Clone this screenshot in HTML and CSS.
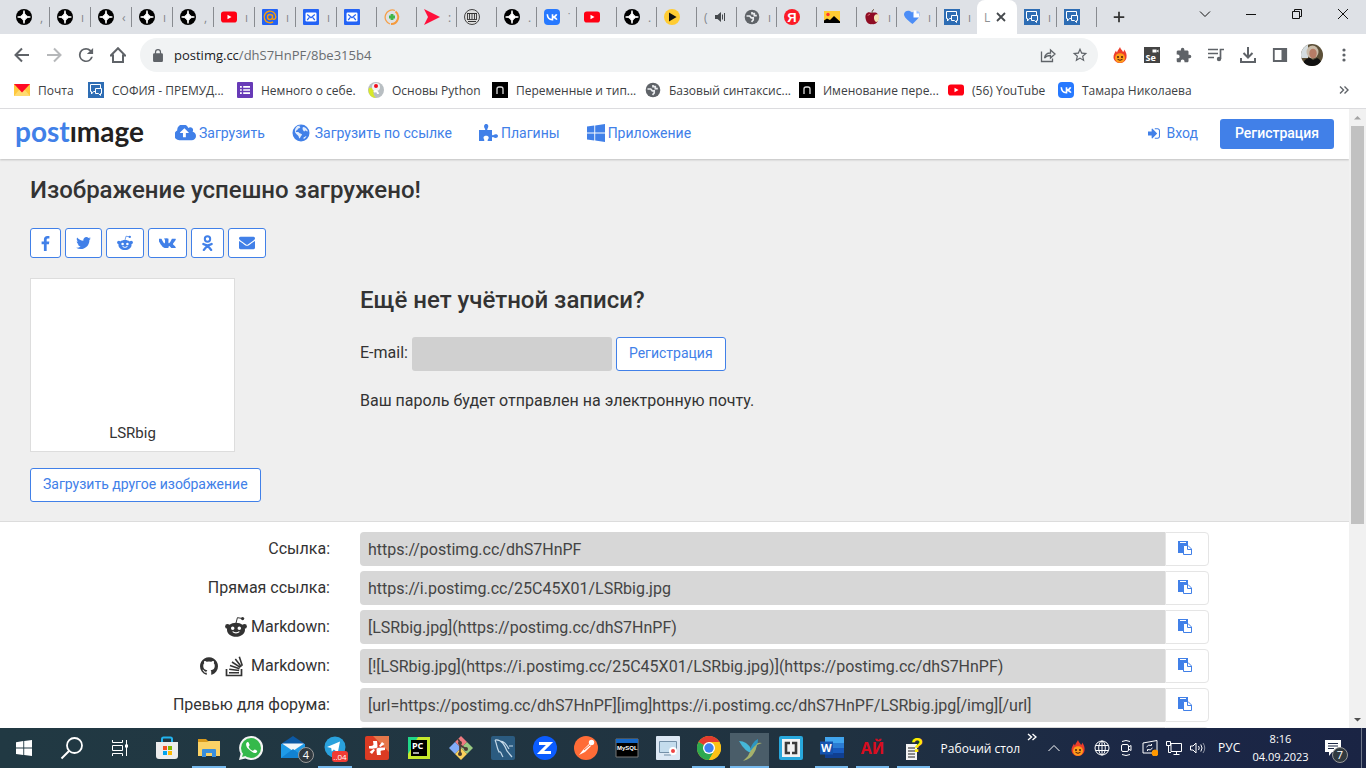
FILE: index.html
```html
<!DOCTYPE html>
<html lang="ru">
<head>
<meta charset="utf-8">
<title>LSRbig — Postimages</title>
<link rel="stylesheet" href="styles.css">
</head>
<body>
<svg class="sprite" aria-hidden="true">
  <symbol id="i-spark" viewBox="0 0 16 16"><circle cx="8" cy="8" r="8" fill="#000"/><path d="M8 1.600Q8.300 7.700 14.400 8 8.300 8.300 8 14.400 7.700 8.300 1.600 8 7.700 7.700 8 1.600z" fill="#fff" stroke="#fff" stroke-width=".9"/></symbol>
  <symbol id="i-yt" viewBox="0 0 16 16"><rect y="2.500" width="16" height="11" rx="2.800" fill="#ff0013"/><path d="M6.500 5.700v4.600l4-2.300z" fill="#fff"/></symbol>
  <symbol id="i-mailru" viewBox="0 0 16 16"><rect width="16" height="16" rx="1" fill="#2463f5"/><path d="M10.500 8a2.500 2.500 0 1 1-5 0 2.500 2.500 0 0 1 5 0zm0-2.500V9c0 2.300 3.300 1.600 3.300-1A5.800 5.800 0 1 0 11 12.900" fill="none" stroke="#ff9e00" stroke-width="1.400"/></symbol>
  <symbol id="i-mail" viewBox="0 0 16 16"><rect width="16" height="16" rx="1" fill="#2463f5"/><rect x="2.500" y="3.500" width="11" height="9" rx="1.200" fill="#fff"/><path d="M4.200 5.500 8 8.800l3.800-3.300M4.200 11l2.200-2.600M11.800 11 9.600 8.400" fill="none" stroke="#2463f5" stroke-width="1.200"/></symbol>
  <symbol id="i-plus" viewBox="0 0 16 16"><path d="M11 1.500A7.200 7.200 0 1 0 6 15" fill="none" stroke="#f5a04a" stroke-width="1.300"/><path d="M11.500 2.500A7 7 0 0 1 7 15" fill="none" stroke="#f59a3d" stroke-width="2"/><path d="M8 5v6M5 8h6" stroke="#41b649" stroke-width="2.800"/></symbol>
  <symbol id="i-arrow" viewBox="0 0 16 16"><path d="M0 0 16 8 0 16 4 8z" fill="#ff0f3b"/></symbol>
  <symbol id="i-museum" viewBox="0 0 16 16"><circle cx="8" cy="8" r="7.500" fill="#ddd" stroke="#444"/><path d="M3 4.500h10M4 12.500h8" stroke="#333"/><path d="M3.500 5v5M5.500 5v5M8 5v5M10.500 5v5M12.500 5v5M3 10.500h10" stroke="#444"/></symbol>
  <symbol id="i-vk" viewBox="0 0 16 16"><rect width="16" height="16" rx="4" fill="#2779ff"/><path d="M3.300 5.300c.2 3.400 1.900 5.400 4.900 5.400h.3V5.300M12.600 5.300c-.5 1.500-2 2.600-3.800 2.800 2 .2 3.400 1.100 4.100 2.600" fill="none" stroke="#fff" stroke-width="1.600"/></symbol>
  <symbol id="i-play" viewBox="0 0 16 16"><circle cx="8" cy="8" r="8" fill="#fc3"/><path d="M5 3.600v8.800L12.600 8z" fill="#111"/></symbol>
  <symbol id="i-globe" viewBox="0 0 16 16"><circle cx="8" cy="8" r="7.300" fill="#5f6368"/><path d="M2.500 7h3.200l1.600 1.800h1.900v2.200L7.500 12.800M8 3v1.700h2.300v1.900h2.500" fill="none" stroke="#e8eaed" stroke-width="1.700"/></symbol>
  <symbol id="i-ya" viewBox="0 0 16 16"><circle cx="8" cy="8" r="8" fill="#fc1c27"/><text x="8" y="12.500" text-anchor="middle" class="g-ya">Я</text></symbol>
  <symbol id="i-pic" viewBox="0 0 16 16"><rect y="2" width="16" height="12" fill="#fc3"/><circle cx="4" cy="5.500" r="1.700" fill="#f33"/><path d="M0 14v-2.500l3-2 3 1.500 4-4 6 5.500V14z" fill="#000"/></symbol>
  <symbol id="i-apple" viewBox="0 0 16 16"><path d="M8 4C3.500 2 1 4.500 1.500 9s3.500 7 6.500 6c3.500 1 6-1.500 6.500-6S12 2.500 8 4z" fill="#8f0d24"/><path d="M14.500 5.500c-3-1-5 1-4.500 4s2 4 3.500 3 2-5 1-7z" fill="#f3e6b5"/><path d="M4 6.500c.5-1 1.500-1.200 2-1" stroke="#e88" fill="none"/><path d="M8 4c0-2 .7-3 2-3.500" stroke="#5b3a1e" fill="none"/></symbol>
  <symbol id="i-heart" viewBox="0 0 16 16"><path d="M8.500 15C3 10.500 0 8 0 5.200 0 2 5 0 8 3.500c3-3 8-1.500 8 2 0 2.500-3 5-7.500 9.500z" fill="#4c8df6"/><path d="M9.500 1.500h3l3 3v4h-6z" fill="#fff"/><path d="M12.500 1.500v3h3" fill="#9cc1ff"/></symbol>
  <symbol id="i-chat" viewBox="0 0 16 16"><rect width="16" height="16" fill="#2e6db4"/><path d="M7 9.500H5.500L3.500 12V9.500h-1v-7h10v4M7.500 6.500h6v5h-1v2l-2-2h-3z" fill="none" stroke="#fff"/></symbol>
  <symbol id="i-ymail" viewBox="0 0 16 16"><path d="M0 2h16v12H0z" fill="#ffc83d"/><path d="M0 14 5 8h6l5 6z" fill="#ffdb70"/><path d="M0 2h16L8 10.500z" fill="#ff0a24"/></symbol>
  <symbol id="i-forms" viewBox="0 0 16 16"><rect width="16" height="16" rx="1" fill="#673ab7"/><path d="M3 4.800h1.800M3 8h1.800M3 11.200h1.800M6.200 4.800H13M6.200 8H13M6.200 11.200H13" stroke="#fff" stroke-width="1.700"/></symbol>
  <symbol id="i-stepik" viewBox="0 0 16 16"><circle cx="8" cy="8" r="8" fill="#b8bec2"/><path d="M1 6c4-1 5 2 4.500 4.500S7 15 8 16C3 16-.8 11 1 6z" fill="#d8e829"/><circle cx="8" cy="5" r="4" fill="#f0f2f3"/><circle cx="8" cy="4" r="2" fill="#f00e1e"/><path d="M6 10c2-2 4 0 4 2" stroke="#fff" stroke-width="2" fill="none"/></symbol>
  <symbol id="i-n" viewBox="0 0 16 16"><rect width="16" height="16" fill="#000"/><path d="M5 12V7q0-2 2-2h2q2 0 2 2v5" fill="none" stroke="#ddd" stroke-width="1.300"/></symbol>
  <symbol id="i-sound" viewBox="0 0 16 16"><path d="M3 6h2.500L9 3v10L5.500 10H3z" fill="#45494d"/><path d="M10.500 5.500v5M12.500 4v8" stroke="#45494d"/></symbol>
  <symbol id="i-x" viewBox="0 0 16 16"><path d="m4 4 8 8M12 4l-8 8" stroke="#45494d" stroke-width="1.800"/></symbol>
  <symbol id="i-flame" viewBox="0 0 16 16"><path d="M8 0c.5 2.500 2.500 3 3 5 1-.5 1-1.500 1-2.500 2 2 3 5 2.500 8-.5 3.500-3.500 5.500-6.500 5.500S1.800 14 1.500 10.500C1.300 7.500 3 5.500 4 3.500c.3 1 .5 1.500 1 2C5.500 3.500 7 2 8 0z" fill="#ee3d2b"/><ellipse cx="8" cy="11" rx="5" ry="4.800" fill="#ff9c1a"/><circle cx="6" cy="10" r="1" fill="#4b1d0c"/><circle cx="10" cy="10" r="1" fill="#4b1d0c"/><path d="M5.500 12.300q2.500 2 5 0" stroke="#4b1d0c" fill="none"/></symbol>
  <symbol id="i-reddit" viewBox="0 0 20 20"><path d="M10 6.400 11.300 1.500l4 .7" fill="none" stroke="currentColor" stroke-width=".9"/><circle cx="16" cy="2.300" r="1.500" fill="currentColor"/><circle cx="2.300" cy="9.500" r="2.200" fill="currentColor"/><circle cx="17.700" cy="9.500" r="2.200" fill="currentColor"/><path fill="currentColor" fill-rule="evenodd" d="M10 6.200c4.700 0 8.200 2.700 8.200 6.200s-3.500 6.400-8.200 6.400-8.200-2.900-8.200-6.400S5.300 6.200 10 6.200zM7 9.600a1.600 1.600 0 1 0 0 3.200 1.600 1.600 0 0 0 0-3.200zm6 0a1.600 1.600 0 1 0 0 3.200 1.600 1.600 0 0 0 0-3.200zM6.600 14.400c1.800 2 5 2 6.800 0l-.7-.5c-1.500 1.300-3.900 1.300-5.400 0z"/></symbol>
  <symbol id="i-paste" viewBox="0 0 16 16"><path d="M1 1h10v4H7v8H1z" fill="#4180e8"/><path d="M3 2.500h6" stroke="#fff"/><path d="M6.500 5.500h4.500l3.500 3.500v5.500h-8z" fill="#fff" stroke="#4180e8"/><path d="M10.500 5.500V9.500h4" fill="none" stroke="#4180e8"/></symbol>
</svg>

<header class="browser">
  <div class="tabs">
    <div class="tab tab-wide"><svg><use href="#i-spark"/></svg><span>,</span></div>
    <div class="tab tab-wide"><svg><use href="#i-spark"/></svg><span>ı</span></div>
    <div class="tab tab-wide"><svg><use href="#i-spark"/></svg><span>‹</span></div>
    <div class="tab tab-wide"><svg><use href="#i-spark"/></svg><span>ı</span></div>
    <div class="tab tab-wide"><svg><use href="#i-spark"/></svg><span>,</span></div>
    <div class="tab tab-wide"><svg><use href="#i-yt"/></svg><span>ı</span></div>
    <div class="tab tab-wide"><svg><use href="#i-mailru"/></svg><span>ı</span></div>
    <div class="tab tab-wide"><svg><use href="#i-mail"/></svg><span>ı</span></div>
    <div class="tab"><svg><use href="#i-mail"/></svg></div>
    <div class="tab"><svg><use href="#i-plus"/></svg></div>
    <div class="tab"><svg><use href="#i-arrow"/></svg><span>:</span></div>
    <div class="tab"><svg><use href="#i-museum"/></svg></div>
    <div class="tab"><svg><use href="#i-spark"/></svg><span>.</span></div>
    <div class="tab"><svg><use href="#i-vk"/></svg><span>˙</span></div>
    <div class="tab"><svg><use href="#i-yt"/></svg></div>
    <div class="tab"><svg><use href="#i-spark"/></svg><span>.</span></div>
    <div class="tab"><svg><use href="#i-play"/></svg></div>
    <div class="tab tab-audio"><span>(</span><svg><use href="#i-sound"/></svg></div>
    <div class="tab"><svg><use href="#i-globe"/></svg><span>ı</span></div>
    <div class="tab"><svg><use href="#i-ya"/></svg></div>
    <div class="tab"><svg><use href="#i-pic"/></svg></div>
    <div class="tab"><svg><use href="#i-apple"/></svg><span>ı</span></div>
    <div class="tab"><svg><use href="#i-heart"/></svg><span>ı</span></div>
    <div class="tab tab-last"><svg><use href="#i-chat"/></svg><span>ı</span></div>
    <div class="tab tab-active"><span>L</span><button aria-label="Закрыть вкладку"><svg><use href="#i-x"/></svg></button></div>
    <div class="tab"><svg><use href="#i-chat"/></svg><span>ı</span></div>
    <div class="tab"><svg><use href="#i-chat"/></svg></div>
    <button class="new-tab" aria-label="Новая вкладка"><svg viewBox="0 0 16 16"><path d="M8 2v12M2 8h12" stroke="#333" stroke-width="2"/></svg></button>
    <div class="window-buttons">
      <button aria-label="Поиск вкладок"><svg viewBox="0 0 12 12"><path d="m1 3.500 5 5 5-5"/></svg></button>
      <button aria-label="Свернуть"><svg viewBox="0 0 12 12"><path d="M1 6.500h10"/></svg></button>
      <button aria-label="Восстановить"><svg viewBox="0 0 12 12"><path d="M1.500 3.500h7v7h-7zM3.500 3.500v-2h7v7h-2"/></svg></button>
      <button aria-label="Закрыть"><svg viewBox="0 0 12 12"><path d="m1 1 10 10M11 1 1 11"/></svg></button>
    </div>
  </div>

  <div class="toolbar">
    <button aria-label="Назад"><svg viewBox="0 0 16 16"><path d="M15 8H2M8 1.500 1.500 8 8 14.500" class="line"/></svg></button>
    <button class="dim" aria-label="Вперёд"><svg viewBox="0 0 16 16"><path d="M1 8h13M8 1.500 14.500 8 8 14.500" class="line"/></svg></button>
    <button aria-label="Обновить"><svg viewBox="3 3 18 18"><path d="M17.650 6.350A7.960 7.960 0 0 0 12 4a8 8 0 1 0 7.730 10h-2.080A6 6 0 1 1 12 6c1.660 0 3.140.69 4.220 1.780L13 11h7V4z" fill="#5f6368"/></svg></button>
    <button aria-label="Домой"><svg viewBox="0 0 16 16"><path d="M.8 8.500 8 1.200l7.200 7.300H13V15H3V8.500z" class="line"/></svg></button>
    <div class="address">
      <svg class="lock" viewBox="4 1 16 21"><path fill="#5f6368" d="M18 8h-1V6A5 5 0 0 0 7 6v2H6a2 2 0 0 0-2 2v10a2 2 0 0 0 2 2h12a2 2 0 0 0 2-2V10a2 2 0 0 0-2-2zM9 6a3 3 0 0 1 6 0v2H9z"/></svg>
      <span class="url"><b>postimg.cc</b>/dhS7HnPF/8be315b4</span>
      <button aria-label="Поделиться"><svg viewBox="0 0 16 16"><path d="M1.500 4.500v10h11v-3M4.500 11c.5-3.500 2.500-5 6-5V3l4.500 4-4.500 4V8.500c-3 0-4.500.5-6 2.500z" fill="none" stroke="#5f6368" stroke-width="1.300"/></svg></button>
      <button aria-label="Добавить закладку"><svg viewBox="1 1 22 22"><path fill="#5f6368" d="m22 9.240-7.190-.62L12 2 9.190 8.630 2 9.240l5.460 4.730L5.820 21 12 17.270 18.180 21l-1.630-7.030zM12 15.400l-3.760 2.270 1-4.280-3.320-2.880 4.380-.38L12 6.100l1.710 4.040 4.380.38-3.320 2.880 1 4.280z"/></svg></button>
    </div>
    <button aria-label="Расширение"><svg><use href="#i-flame"/></svg></button>
    <button aria-label="Selenium"><svg viewBox="0 0 16 16"><path d="M0 0h16v16H0z" fill="#444"/><path d="M8.500 2.500h4v3h-4zM12.500 4l2-1.500v3z" fill="#fff"/><text x="1.500" y="13.800" class="g-se">Se</text></svg></button>
    <button aria-label="Расширения"><svg viewBox="1 0 23 23"><path fill="#5f6368" d="M20.500 11H19V7c0-1.100-.9-2-2-2h-4V3.500a2.500 2.500 0 0 0-5 0V5H4c-1.100 0-2 .9-2 2v3.800h1.500a2.700 2.700 0 0 1 0 5.400H2V20c0 1.100.9 2 2 2h3.800v-1.500a2.700 2.700 0 0 1 5.400 0V22H17c1.100 0 2-.9 2-2v-4h1.500a2.500 2.500 0 0 0 0-5z"/></svg></button>
    <button aria-label="Медиа"><svg viewBox="0 0 16 16"><path d="M0 2.500h10M0 6.500h10M0 10.500h6M12.500 12V2.500H16" stroke="#5f6368" stroke-width="1.700" fill="none"/><circle cx="11" cy="12" r="2.200" fill="#5f6368"/></svg></button>
    <button aria-label="Загрузки"><svg viewBox="0 0 16 16"><path d="M8 0v10M3.500 6 8 10.500 12.500 6M1 11v4h14v-4" stroke="#5f6368" stroke-width="2" fill="none"/></svg></button>
    <button aria-label="Боковая панель"><svg viewBox="0 0 16 16"><path d="M1.800 2h12.400v12H1.800z" fill="none" stroke="#5f6368" stroke-width="1.800"/><path d="M9.500 2H14v12H9.500z" fill="#5f6368"/></svg></button>
    <button aria-label="Профиль" class="profile"><svg viewBox="0 0 22 22"><clipPath id="av"><circle cx="11" cy="11" r="11"/></clipPath><g clip-path="url(#av)"><path d="M0 0h22v22H0z" fill="#5c5038"/><path d="M0 0h7v14H0z" fill="#d5dde0"/><ellipse cx="11.500" cy="8" rx="6" ry="6.500" fill="#c9bba8"/><ellipse cx="12" cy="9.500" rx="3.700" ry="4.800" fill="#b77c66"/><path d="M2 22c0-6 4-8 7-8l3 2 4-2c3 1 5 4 5 8z" fill="#111"/></g></svg></button>
    <button aria-label="Меню"><svg viewBox="0 0 16 16" fill="#5f6368"><circle cx="8" cy="3" r="1.600"/><circle cx="8" cy="8" r="1.600"/><circle cx="8" cy="13" r="1.600"/></svg></button>
  </div>

  <nav class="bookmarks">
    <a href="#"><svg><use href="#i-ymail"/></svg>Почта</a>
    <a href="#"><svg><use href="#i-chat"/></svg>СОФИЯ - ПРЕМУД...</a>
    <a href="#"><svg><use href="#i-forms"/></svg>Немного о себе.</a>
    <a href="#"><svg><use href="#i-stepik"/></svg>Основы Python</a>
    <a href="#"><svg><use href="#i-n"/></svg>Переменные и тип...</a>
    <a href="#"><svg><use href="#i-globe"/></svg>Базовый синтаксис...</a>
    <a href="#"><svg><use href="#i-n"/></svg>Именование пере...</a>
    <a href="#"><svg><use href="#i-yt"/></svg>(56) YouTube</a>
    <a href="#"><svg><use href="#i-vk"/></svg>Тамара Николаева</a>
    <button aria-label="Другие закладки"><svg viewBox="0 0 10 10"><path d="m1 1.500 3.500 3.500L1 8.500M5.500 1.500 9 5 5.500 8.500" fill="none" stroke="#5f6368" stroke-width="1.400"/></svg></button>
  </nav>
</header>

<div class="viewport">
  <div class="page">
    <header class="site-header">
      <a class="logo" href="#"><span>post</span>ımage</a>
      <nav class="site-nav">
        <a href="#"><svg class="ic-cloud" viewBox="0 192 1856 1408"><path fill="currentColor" d="M1216 864q0-14-9-23l-352-352q-9-9-23-9t-23 9l-351 351q-10 12-10 24 0 14 9 23t23 9h224v352q0 13 9.500 22.500t22.500 9.500h192q13 0 22.500-9.500t9.500-22.500v-352h224q13 0 22.500-9.500t9.500-22.500zm640 288q0 159-112.500 271.500t-271.500 112.500h-1088q-185 0-316.500-131.500t-131.500-316.500q0-130 70-240t188-165q-2-30-2-43 0-212 150-362t362-150q156 0 285.500 87t188.500 231q71-62 166-62 106 0 181 75t75 181q0 76-41 138 130 31 213.500 135.500t83.500 238.500z"/></svg>Загрузить</a>
        <a href="#" class="nav-globe"><svg viewBox="0 0 18 18"><circle cx="9" cy="9" r="8.500" fill="currentColor"/><path d="M9 1.500c-1.500.3-2 1-1 1.500s-.5 1.200-1.500 1.500-.5 1.500-2 2-.5 2 1 1.500 1.500 1 3 1.500 2 1 1 2-1 2-2 3c-.8-.7-.5-2-1.500-3S3.500 9.500 3 8 3.500 3 5.500 2zM11 3c2 .2 3 1 4 2.500.8 1.200.8 1.500.5 2-1.500 0-1-1-2-1s-.7 1.500-1.700.7S10 4.200 11 3zM12 13c1-.2 1.800-1 2.500-.8-.5 1.200-1.500 2.200-2.700 2.800-.4-.6-.3-1.400.2-2z" fill="#fff" opacity=".85"/></svg>Загрузить по ссылке</a>
        <a href="#"><svg class="ic-puzzle" viewBox="0 0 19 18"><path fill="currentColor" d="M0 6h5.500c.9 0 .9-.7.3-1.600C4.500 2.700 5 0 7.200 0s2.700 2.700 1.400 4.400C8 5.300 8.100 6 9 6h4v4.500c0 .8.800 1 1.500.4 1.700-1.300 4.500-.9 4.500 1.100s-2.800 2.500-4.500 1.200c-.7-.6-1.500-.3-1.500.5V17H8.800c-.9-1 .9-1.800.9-3.200s-1.300-2-2.600-2-2.600.6-2.600 2S6 16 5.100 17H0z"/></svg>Плагины</a>
        <a href="#"><svg viewBox="0 0 18 18"><path fill="currentColor" d="M0 2.600 7.300 1.500v7H0zM8.200 1.400 18 0v8.500H8.200zM0 9.400h7.300v7.100L0 15.400zM8.200 9.400H18V18l-9.800-1.400z"/></svg>Приложение</a>
      </nav>
      <a class="login" href="#"><svg viewBox="192 256 1472 1280"><path fill="currentColor" d="M1312 896q0 26-19 45l-544 544q-19 19-45 19t-45-19-19-45v-288h-448v-512h448v-288q0-26 19-45t45-19 45 19l544 544q19 19 19 45zm352-352v704q0 119-84.500 203.500t-203.500 84.500h-352v-128h352q66 0 113-47t47-113v-704q0-66-47-113t-113-47h-352V256h352q119 0 203.500 84.500t84.500 203.500z"/></svg>Вход</a>
      <a class="register" href="#">Регистрация</a>
    </header>

    <main>
      <section class="uploaded">
        <h1>Изображение успешно загружено!</h1>
        <div class="share">
          <a href="#" aria-label="Facebook"><svg class="w-s" viewBox="479 0 864 1664"><path fill="currentColor" d="M1343 12v264h-157q-86 0-116 36t-30 108v189h293l-39 296h-254v759h-306v-759h-255v-296h255v-218q0-186 104-288.500t277-102.500q147 0 228 12z"/></svg></a>
          <a href="#" aria-label="Twitter"><svg class="w-m" viewBox="108 256 1576 1280"><path fill="currentColor" d="M1684 408q-67 98-162 167 1 14 1 42 0 130-38 259.500t-115.500 248.500-184.500 210.500-258 146-323 54.500q-271 0-496-145 35 4 78 4 225 0 401-138-105-2-188-64.500t-114-159.500q33 5 61 5 43 0 85-11-112-23-185.500-111.500t-73.500-205.500v-4q68 38 146 41-66-44-105-115t-39-154q0-88 44-163 121 149 294.500 238.500t371.500 99.500q-8-38-8-74 0-134 94.500-228.500t228.500-94.500q140 0 236 102 109-21 205-78-37 115-142 178 93-10 186-50z"/></svg></a>
          <a href="#" aria-label="Reddit"><svg class="w-l"><use href="#i-reddit"/></svg></a>
          <a href="#" aria-label="ВКонтакте"><svg class="w-xl" viewBox="40 420 1830 1050"><path fill="currentColor" d="M1853 520q23 64-150 294-24 32-65 85-78 100-90 131-17 41 14 81 17 21 81 82h1l1 1 1 1 2 2q141 131 191 221 3 5 6.500 12.500t7 26.500-.5 34-25 27.500-59 12.500l-256 4q-24 5-56-5t-52-22l-20-12q-30-21-70-64t-68.500-77.500-61-58-56.500-15.500q-3 1-8 3.500t-17 14.500-21.500 29.500-17 52-6.500 77.500q0 15-3.500 27.500t-7.500 18.500l-4 5q-18 19-53 22h-115q-71 4-146-16.500t-131.500-53-103-66-70.500-57.500l-25-24q-10-10-27.500-30t-71.500-91-106-151-122.500-211-130.500-272q-6-16-6-27t3-16l4-6q15-19 57-19l274-2q12 2 23 6.500t16 8.500l5 3q16 11 24 32 20 50 46 103.500t41 81.500l16 29q29 60 56 104t48.500 68.500 41.500 38.500 34 14 27-5q2-1 5-5t12-22 13.500-47 9.500-81 0-125q-2-40-9-73t-14-46l-6-12q-25-34-85-43-13-2 5-24 17-19 38-30 53-26 239-24 82 1 135 13 20 5 33.500 13.500t20.500 24 10.500 32 3.500 45.500-1 55-2.500 70.500-1.500 82.500q0 11-1 42t-.5 48 3.500 40.500 11.500 39 22.500 24.500q8 2 17 4t26-11 38-34.500 52-67 68-107.500q60-104 107-225 4-10 10-17.500t11-10.500l4-3 5-2.500 13-3 20-.5 288-2q39-5 64 2.500t31 16.500z"/></svg></a>
          <a href="#" aria-label="Одноклассники"><svg class="w-ok" viewBox="0 0 11 16"><circle cx="5.500" cy="4" r="2.700" fill="none" stroke="currentColor" stroke-width="2"/><path d="M1.300 9q4.200 2.600 8.400 0M5.500 10.500 1.800 15M5.500 10.500 9.200 15" fill="none" stroke="currentColor" stroke-width="2.200" stroke-linecap="round"/></svg></a>
          <a href="#" aria-label="Почта"><svg class="w-l" viewBox="0 256 1792 1408"><path fill="currentColor" d="M1792 710v794q0 66-47 113t-113 47h-1472q-66 0-113-47t-47-113v-794q44 49 101 87 362 246 497 345 57 42 92.500 65.500t94.500 48 110 24.500h2q51 0 110-24.500t94.500-48 92.500-65.500q170-123 498-345 57-39 100-87zm0-294q0 79-49 151t-122 123q-376 261-468 325-10 7-42.500 31t-54 38.500-52 32.500-57.500 27-50 9h-2q-23 0-50-9t-57.500-27-52-32.500-54-38.500-42.500-31q-91-64-262-182.500t-205-142.500q-62-42-117-115.500t-55-136.500q0-78 41.500-130t118.500-52h1472q65 0 112.500 47t47.500 113z"/></svg></a>
        </div>
        <div class="columns">
          <div class="preview">
            <figure><figcaption>LSRbig</figcaption></figure>
            <a class="outline-button" href="#">Загрузить другое изображение</a>
          </div>
          <form class="signup">
            <h2>Ещё нет учётной записи?</h2>
            <div class="signup-line">
              <label for="email">E-mail:</label>
              <input id="email" type="email">
              <button class="outline-button" type="button">Регистрация</button>
            </div>
            <p>Ваш пароль будет отправлен на электронную почту.</p>
          </form>
        </div>
      </section>

      <section class="codes">
        <div class="code"><label for="c1">Ссылка:</label><div class="field"><input id="c1" readonly value="https://postimg.cc/dhS7HnPF"><button aria-label="Копировать"><svg><use href="#i-paste"/></svg></button></div></div>
        <div class="code"><label for="c2">Прямая ссылка:</label><div class="field"><input id="c2" readonly value="https://i.postimg.cc/25C45X01/LSRbig.jpg"><button aria-label="Копировать"><svg><use href="#i-paste"/></svg></button></div></div>
        <div class="code"><label for="c3"><svg class="reddit"><use href="#i-reddit"/></svg>Markdown:</label><div class="field"><input id="c3" readonly value="[LSRbig.jpg](https://postimg.cc/dhS7HnPF)"><button aria-label="Копировать"><svg><use href="#i-paste"/></svg></button></div></div>
        <div class="code"><label for="c4"><svg class="github" viewBox="128 128 1536 1500"><path fill="currentColor" d="M896 128q209 0 385.500 103t279.500 279.500 103 385.500q0 251-146.500 451.500t-378.500 277.500q-27 5-40-7t-13-30q0-3 .5-76.500t.5-134.500q0-97-52-142 57-6 102.500-18t94-39 81-66.500 53-105 20.500-150.500q0-119-79-206 37-91-8-204-28-9-81 11t-92 44l-38 24q-93-26-192-26t-192 26q-16-11-42.500-27t-83.500-38.500-85-13.500q-45 113-8 204-79 87-79 206 0 85 20.500 150t52.500 105 80.500 67 94 39 102.500 18q-39 36-49 103-21 10-45 15t-57 5-65.500-21.500-55.500-62.500q-19-32-48.500-52t-49.500-24l-20-3q-21 0-29 4.500t-5 11.500 9 14 13 12l7 5q22 10 43.500 38t31.500 51l10 23q13 38 44 61.500t67 30 69.500 7 55.500-3.500l23-4q0 38 .5 88.500t.5 54.500q0 18-13 30t-40 7q-232-77-378.500-277.500t-146.500-451.500q0-209 103-385.500t279.500-279.500 385.500-103z"/></svg><svg class="stack" viewBox="0 0 18 21"><path d="M1.500 13v6.500h15V13" fill="none" stroke="currentColor" stroke-width="1.700"/><path d="M4 16.700h10M4.200 13.200l9.900 1.300M5 9.600l9.500 3.200M7 6l8.300 5.400M10.300 3l6 7.700M14.300.8l3 9" stroke="currentColor" stroke-width="1.600"/></svg>Markdown:</label><div class="field"><input id="c4" readonly value="[![LSRbig.jpg](https://i.postimg.cc/25C45X01/LSRbig.jpg)](https://postimg.cc/dhS7HnPF)"><button aria-label="Копировать"><svg><use href="#i-paste"/></svg></button></div></div>
        <div class="code"><label for="c5">Превью для форума:</label><div class="field"><input id="c5" readonly value="[url=https://postimg.cc/dhS7HnPF][img]https://i.postimg.cc/dhS7HnPF/LSRbig.jpg[/img][/url]"><button aria-label="Копировать"><svg><use href="#i-paste"/></svg></button></div></div>
        <div class="code"><span></span><div class="field"><input readonly aria-label="Код"><button aria-label="Копировать"><svg><use href="#i-paste"/></svg></button></div></div>
      </section>
    </main>
  </div>
  <div class="scrollbar" aria-hidden="true">
    <svg viewBox="0 0 17 17"><path d="M5 10.500 8.500 7l3.500 3.500z" fill="#a3a3a3"/></svg>
    <div class="track"><div class="thumb"></div></div>
    <svg viewBox="0 0 17 17"><path d="M5 7l3.500 3.500L12 7z" fill="#505050"/></svg>
  </div>
</div>

<footer class="taskbar">
  <button class="sys" aria-label="Пуск"><svg class="s16" viewBox="0 0 16 16"><path d="M0 2.200 7.300 1v6.600H0zM8.200.9 16 0v7.600H8.200zM0 8.500h7.300V15L0 14zM8.200 8.500H16V16l-7.800-1z" fill="#fff"/></svg></button>
  <button class="sys" aria-label="Поиск"><svg viewBox="0 0 24 24"><circle cx="14.500" cy="9.500" r="7.500" fill="none" stroke="#fff" stroke-width="1.800"/><path d="M9 15 1.500 22.500" stroke="#fff" stroke-width="2"/></svg></button>
  <button class="sys" aria-label="Представление задач"><svg class="s16" viewBox="0 0 16 16"><path d="M.5 0v2.500h10V0M.5 5.500h10v5H.5zM.5 16v-2.500h10V16M14.500 0v16" fill="none" stroke="#fff"/><path d="M13 4.500h3v3h-3z" fill="#fff"/></svg></button>
  <button class="app store" aria-label="Microsoft Store"><svg viewBox="0 0 24 24"><path d="M7 7V3q0-1.500 1.500-1.500h7Q17 1.500 17 3v4" fill="none" stroke="#22b3ee" stroke-width="2"/><path d="M1 6h22v14q0 3-3 3H4q-3 0-3-3z" fill="#ececec"/><path d="M8 10h4v4H8z" fill="#f25022"/><path d="M13 10h4v4h-4z" fill="#7fba00"/><path d="M8 15h4v4H8z" fill="#00a4ef"/><path d="M13 15h4v4h-4z" fill="#ffb900"/></svg></button>
  <button class="app run" aria-label="Проводник"><svg viewBox="0 0 24 24"><path d="M1 3h8l2 2h11v5H1z" fill="#d99a1c"/><path d="M1 6h9l2-1h11v15H1z" fill="#fbd266"/><path d="M5 21v-7q0-1 1-1h12q1 0 1 1v7h-4v-4H9v4z" fill="#3a8fdc"/></svg></button>
  <button class="app" aria-label="WhatsApp"><svg viewBox="0 0 24 24"><path d="M12 0a12 12 0 1 1-5.600 22.500L0 24l1.600-6.200A12 12 0 0 1 12 0z" fill="#f4f4f4"/><circle cx="12" cy="12" r="10" fill="#35b94b"/><path d="m3 21 1.500-5 3.500 3.500z" fill="#35b94b"/><path d="M8.500 6c-2 1-2 4 1 7s6 5 8 3.500c1.500-1.500.5-2-1.500-3-1-.5-1.500 2-3 1s-2.800-2-3.300-3.500c-.3-1 1.300-1.200.8-2.500S9.500 5.500 8.500 6z" fill="#fff"/></svg></button>
  <button class="app" aria-label="Почта"><svg viewBox="0 0 24 24"><path d="M0 8 12 0l12 8v3H0z" fill="#0c59a4"/><path d="M0 8h24v14H0z" fill="#1f9be8"/><path d="M1 7.500h22L12 15z" fill="#f2f6f9"/><path d="m0 22 12-9 12 9z" fill="#1282d2"/></svg><span class="badge">4</span></button>
  <button class="app run" aria-label="Telegram"><svg viewBox="0 0 24 24"><circle cx="12" cy="11" r="10.500" fill="#2aa1dc"/><path d="m4 11 13-5.500-2.200 11-4-3-2 2-.6-3.500z" fill="#fff"/></svg><span class="badge red">..04</span></button>
  <button class="app" aria-label="XMind"><svg viewBox="0 0 24 24"><rect width="24" height="24" rx="2" fill="#dc3b23"/><path d="M24 0v16L8 0z" fill="#e5774a"/><path d="M8 5h4q.5 3 .5 6.500Q11 13 4 12.500V10q4 0 4.500-1.500zM16 19h-4q-.5-3-.5-6.500Q13 11 20 11.500V14q-4 0-4.500 1.500zM14 10l3-4 2.500 2-4 3zM10 14l-3 4-2.500-2 4-3z" fill="#fff"/></svg></button>
  <button class="app" aria-label="PyCharm"><svg viewBox="0 0 24 24"><path d="M1 1h22v22H1z" fill="#c6e92c"/><path d="M1 1h10L1 18z" fill="#21d789"/><path d="M4 4h16v16H4z" fill="#000"/><text x="5" y="12.500" class="g-pc">PC</text><path d="M6 17h6" stroke="#fff" stroke-width="1.300"/></svg></button>
  <button class="app" aria-label="Git"><svg viewBox="0 0 24 24"><path d="m12 0 6 6-6 6-6-6z" fill="#ee7a80"/><path d="m6 6 6 6-6 6-6-6z" fill="#82acf8"/><path d="m18 6 6 6-6 6-6-6z" fill="#99c982"/><path d="m12 12 6 6-6 6-6-6z" fill="#fbd05b"/><path d="M9 3 11 6v12M11 9l6 4" stroke="#493b35" stroke-width="1.700" fill="none"/><circle cx="11" cy="7" r="2" fill="#493b35"/><circle cx="11" cy="18" r="2" fill="#493b35"/><circle cx="17" cy="13" r="2" fill="#493b35"/></svg></button>
  <button class="app" aria-label="MySQL Workbench"><svg viewBox="0 0 24 24"><rect width="24" height="24" rx="2" fill="#2b5b80"/><path d="M4 4c7-1 10 6 12 11l5 6M4 4c2 4 1 6 4 12 2-1 2 2 4 5M9 5c4 0 6 3 9 8M18 10h4" fill="none" stroke="#c5d9e8" stroke-width="1.200"/></svg></button>
  <button class="app narrow" aria-label="Zoom"><svg viewBox="0 0 24 24"><circle cx="12" cy="12" r="12" fill="#0b5cff"/><path d="M6 7.500h10.500L7.500 16.500H18" fill="none" stroke="#fff" stroke-width="3"/></svg></button>
  <button class="app narrow" aria-label="Postman"><svg viewBox="0 0 24 24"><circle cx="12" cy="12" r="12" fill="#ff6c37"/><path d="m5 19 4-5 6-6 2 2-6 6z" fill="#fff"/><circle cx="17.500" cy="6.500" r="2.700" fill="#fff"/><path d="m10 14 6-5" stroke="#ff6c37"/></svg></button>
  <button class="app narrow" aria-label="MySQL"><svg viewBox="0 0 24 24"><path d="M1 3h22v18H1z" fill="#000" stroke="#777"/><path d="M1 3h22v4H1z" fill="#1668c7"/><text x="2" y="14" class="g-my">MySQL</text></svg></button>
  <button class="app narrow" aria-label="Снимок экрана"><svg viewBox="0 0 24 24"><rect width="24" height="24" rx="1" fill="#dce8f4"/><path d="M3.500 5.500h17v11h-17zM8 19h7" fill="#c4dced" stroke="#7490a8"/><circle cx="17" cy="15" r="4" fill="#fff"/><circle cx="17" cy="15" r="2" fill="#e44"/></svg></button>
  <button class="app narrow run" aria-label="Chrome"><svg viewBox="0 0 24 24"><circle cx="12" cy="12" r="12" fill="#fbc116"/><path d="M12 12 1.600 6A12 12 0 0 1 22.400 6H12z" fill="#e33b2e"/><path d="M12 12 1.600 6A12 12 0 0 0 12 24l5.200-9z" fill="#2da94f"/><path d="M12 12V6h10.400A12 12 0 0 1 12 24l5.200-9z" fill="#fbc116"/><circle cx="12" cy="12" r="6" fill="#fff"/><circle cx="12" cy="12" r="4.700" fill="#3d7ff0"/></svg></button>
  <button class="app narrow run current" aria-label="Колибри"><svg viewBox="0 0 24 24"><path d="M1 2q8 0 12 8l1 4Q7 13 1 2z" fill="#45b7d8"/><path d="M12 11Q14 3 20 0q0 8-5 12z" fill="#2d95c1"/><path d="M24 4q-5-1-6 2-5 4-8 11l-5 5q8-2 11-8 2-3 3-8z" fill="#a5b16b"/></svg></button>
  <button class="app narrow" aria-label="Brackets"><svg viewBox="0 0 24 24"><rect width="24" height="24" rx="2" fill="#28a8dd"/><path d="M3 3h18v18H3z" fill="#f2f2f2"/><path d="M11 7H7v10h4M13 7h4v10h-4" fill="none" stroke="#3b3b3b" stroke-width="2.600"/></svg></button>
  <button class="app narrow run" aria-label="Word"><svg viewBox="0 0 24 24"><path d="M5 1h19v6H5z" fill="#41a5ee"/><path d="M5 7h19v5H5z" fill="#2b7cd3"/><path d="M5 12h19v5H5z" fill="#185abd"/><path d="M5 17h19v5H5z" fill="#103f91"/><path d="M0 5.500h13v13H0z" fill="#1453ae"/><text x="1" y="15.800" class="g-word">W</text></svg></button>
  <button class="app narrow run letters">АЙ</button>
  <button class="app narrow run" aria-label="Справка"><svg viewBox="0 0 24 24"><path d="M4 8h11v16H4z" fill="#f3f3f3"/><path d="M6 12h7M6 15h7M6 18h7M6 21h7" stroke="#222" stroke-width="1.200"/><text x="9" y="16" class="g-help">?</text></svg></button>
  <div class="desktop">Рабочий стол<svg viewBox="0 0 10 10"><path d="m1 1 3.500 3L1 7M5.500 1 9 4 5.500 7" fill="none" stroke="#fff" stroke-width="1.400"/></svg></div>
  <div class="tray">
    <svg viewBox="0 0 16 16"><path d="m2.500 11 5.500-5.500 5.500 5.500"/></svg>
    <svg class="plain"><use href="#i-flame"/></svg>
    <svg viewBox="0 0 16 16"><circle cx="8" cy="8" r="7"/><ellipse cx="8" cy="8" rx="3.300" ry="7"/><path d="M1.500 5.500h13M1.500 10.500h13M8 1v14"/></svg>
    <svg viewBox="0 0 16 16"><rect x="3.500" y="4.500" width="7" height="7" rx="1.500"/><path d="m10.500 7 2.500-1.500v5L10.500 9M4 1.500q4-2 8 0M4 14.500q4 2 8 0"/></svg>
    <svg viewBox="0 0 16 16"><path d="M1 3 15 .5V13H1zM4.500 7q2-3 5-1.500V4M10.500 8q-2 3-5 1.500V11"/><circle cx="13" cy="13" r="3" fill="#ff9800" stroke="#ff9800"/></svg>
    <svg viewBox="0 0 16 16"><path d="M5 3.500h10.500v8H5zM7.500 14.500h6M10.500 11.500v3M.5 1.500h4v4h-4zM2.500 5.500v7H5"/></svg>
    <svg viewBox="0 0 16 16"><path d="M.5 6v4h2.500l3 3V3L3 6zM8.500 6q1.500 2 0 4M10.800 4.500q2.500 3.500 0 7"/><path d="M13 3q3.500 5 0 10" opacity=".5"/></svg>
  </div>
  <span class="lang">РУС</span>
  <div class="clock"><span>8:16</span><span>04.09.2023</span></div>
  <button class="notify" aria-label="Уведомления"><svg viewBox="0 0 16 16"><path d="M0 0h16v12H7l-3 4v-4H0z" fill="#fff"/><path d="M3 3.500h10M3 6h10M3 8.500h6" stroke="#1c2846"/></svg><span class="badge">7</span></button>
</footer>
</body>
</html>
```
FILE: styles.css
```css
* { box-sizing: border-box; }
body { margin: 0; height: 100vh; display: flex; flex-direction: column; overflow: hidden; background: #fff; font-family: "Open Sans", "Noto Sans", sans-serif; font-size: 12px; }
button { margin: 0; padding: 0; border: 0; background: none; font: inherit; color: inherit; }
a { color: inherit; text-decoration: none; }
svg { display: block; flex: none; width: 16px; height: 16px; }
svg.sprite { position: absolute; width: 0; height: 0; }
.g-ya { font: bold 13px "Liberation Sans", sans-serif; fill: #fff; }
.g-se { font: bold 9px "Noto Sans", sans-serif; fill: #fff; }
.g-pc { font: bold 9px "Noto Sans", sans-serif; fill: #fff; }
.g-my { font: bold 6px "Liberation Sans", sans-serif; fill: #fff; }
.g-word { font: bold 11px "Noto Sans", sans-serif; fill: #fff; }
.g-help { font: bold 20px "Liberation Sans", sans-serif; fill: #ffeb00; }

/* Browser window */
.browser { flex: none; border-bottom: 1px solid #dcdcdf; }
.tabs { display: flex; height: 34px; padding-left: 9px; background: #dee1e6; color: #45494d; }
.tab { position: relative; flex: 0 0 40px; display: flex; align-items: center; gap: 8px; padding-left: 7px; }
.tab-wide { flex-basis: 41px; }
.tab::after { content: ""; position: absolute; right: 0; top: 7px; width: 1px; height: 20px; background: #888b90; }
.tab span { opacity: .6; }
.tab-last::after, .tab-active::after { display: none; }
.tab-audio { gap: 4px; }
.tab-active { gap: 3px; background: #fff; border-radius: 8px 8px 0 0; }
.new-tab { display: grid; place-items: center; width: 44px; }
.new-tab svg { width: 14px; height: 14px; }
.window-buttons { display: flex; margin-left: auto; height: 28px; }
.window-buttons button { display: grid; place-items: center; width: 46px; }
.window-buttons svg { width: 12px; height: 12px; fill: none; stroke: #111; }

.toolbar { display: flex; align-items: center; height: 42px; padding: 0 6px; }
.toolbar button { display: grid; place-items: center; flex: none; width: 32px; height: 32px; }
.toolbar .dim { opacity: .45; }
.toolbar .line { fill: none; stroke: #5f6368; stroke-width: 2; }
.toolbar .profile svg { width: 22px; height: 22px; }
.address { flex: 1; display: flex; align-items: center; height: 34px; margin: 0 6px; padding: 0 2px 0 13px; border-radius: 17px; background: #f1f3f4; }
.address .lock { width: 10px; height: 13px; }
.url { flex: 1; padding-left: 11px; font-size: 13px; color: #696d71; }
.url b { font-weight: 400; color: #202124; }

.bookmarks { display: grid; grid-template-columns: 74px 149px 131px 124px 153px 154px 149px 110px 1fr 16px; align-items: center; height: 32px; padding: 0 14px 4px; color: #3c4043; white-space: nowrap; }
.bookmarks a { display: flex; align-items: center; gap: 8px; }
.bookmarks button svg { width: 10px; height: 10px; margin: auto; }

/* Page */
.viewport { flex: 1; min-height: 0; display: flex; }
.page { flex: 1; min-width: 0; overflow: hidden; font-family: Roboto, sans-serif; font-size: 16px; line-height: 20px; color: #333; }
.site-header { position: relative; display: flex; align-items: center; height: 50px; padding: 0 15px; background: #fff; box-shadow: 0 1px 2px rgba(0, 0, 0, .2); font-size: 14px; color: #4180e8; }
.logo { width: 160px; padding-bottom: 6px; font: 700 28px/32px Lato, sans-serif; font-variant-ligatures: none; color: #231f20; }
.logo span { color: #4180e8; }
.site-nav { display: flex; gap: 27px; padding-bottom: 2px; }
.site-nav a { display: flex; align-items: center; gap: 3px; }
.site-nav .nav-globe { gap: 5px; }
.site-nav svg { width: 18px; height: 18px; }
.site-nav .ic-cloud { width: 21px; height: 16px; }
.site-nav .ic-puzzle { width: 19px; height: 18px; }
.login { display: flex; align-items: center; gap: 6px; margin-left: auto; padding-bottom: 2px; }
.login svg { width: 12px; height: 11px; }
.register { margin-left: 22px; padding: 4px 15px 6px; border-radius: 3px; background: #4180e8; color: #fff; font-weight: 500; }

.uploaded { padding: 18px 30px 19px; background: #efefef; border-bottom: 1px solid #dcdcdc; }
h1, h2 { margin: 0; font-size: 24px; line-height: 26px; font-weight: 500; }
.share { display: flex; gap: 4px; margin-top: 25px; }
.share a { display: flex; align-items: center; height: 30px; padding: 0 10px; border: 1px solid #4180e8; border-radius: 3px; background: #fff; color: #4180e8; }
.share .w-s { width: 9px; height: 15px; }
.share .w-m { width: 15px; height: 12px; }
.share .w-l { width: 16px; height: 16px; }
.share .w-xl { width: 17px; height: 10px; }
.share .w-ok { width: 11px; height: 16px; }
.columns { display: grid; grid-template-columns: 330px 1fr; margin-top: 20px; }
.preview { display: flex; flex-direction: column; align-items: flex-start; gap: 16px; }
figure { display: flex; align-items: flex-end; justify-content: center; width: 205px; height: 174px; margin: 0; padding-bottom: 8px; border: 1px solid #ddd; background: #fff; font-size: 15px; }
.outline-button { height: 34px; padding: 0 12px 2px; border: 1px solid #4180e8; border-radius: 3px; background: #fff; font-size: 14px; line-height: 30px; color: #4180e8; }
.signup { padding-top: 9px; }
.signup-line { display: flex; gap: 4px; margin: 24px 0 20px; line-height: 31px; }
.signup-line input { width: 200px; height: 34px; padding: 0 8px; border: 0; border-radius: 3px; background: #d0d0d0; }
.signup p { margin: 0; }

.codes { display: grid; gap: 5px; padding: 10px 140px 10px 0; background: #fff; }
.code { display: grid; grid-template-columns: 330px minmax(0, 1fr); gap: 30px; }
.code label { display: flex; align-items: center; justify-content: flex-end; height: 34px; }
.field { display: flex; height: 34px; }
.field input { flex: 1; min-width: 0; padding: 2px 8px 0; border: 0; border-radius: 4px 0 0 4px; background: #d7d7d7; font: inherit; color: #444; }
.field button { display: grid; place-items: center; width: 44px; padding: 0 4px 2px 0; border: 1px solid #e5e5e5; border-radius: 0 4px 4px 0; background: #fff; }
.code .reddit { width: 22px; height: 22px; margin-right: 4px; }
.code .github { width: 18px; height: 18px; margin-right: 7px; }
.code .stack { width: 18px; height: 21px; margin-right: 8px; }

.scrollbar { flex: none; display: flex; flex-direction: column; width: 17px; background: #f1f1f1; }
.scrollbar svg { width: 17px; height: 17px; }
.track { flex: 1; padding: 0 2px; }
.thumb { height: 68%; background: #c1c1c1; }

/* Taskbar */
.taskbar { flex: none; display: flex; align-items: stretch; height: 40px; background: linear-gradient(90deg, #213943, #203240 60%, #1b2746 85%, #1a2444); color: #fff; }
.taskbar svg { width: 24px; height: 24px; }
.taskbar .s16 { width: 16px; height: 16px; }
.sys { display: grid; place-items: center; width: 48px; }
.app { position: relative; display: grid; place-items: center; width: 42px; }
.app.store { margin-left: 2px; }
.app.narrow { width: 41px; }
.run::after { content: ""; position: absolute; left: 4px; right: 4px; bottom: 0; height: 2px; background: #76b9ed; }
.app.current { background: #4a5d69; background-clip: content-box; padding: 5px 1px 0; }
.current::after { left: 1px; right: 1px; }
.badge { position: absolute; left: 26px; top: 19px; width: 16px; height: 16px; border: 1px solid #999; border-radius: 8px; background: #30393f; font-size: 11px; line-height: 14px; text-align: center; }
.badge.red { left: 18px; top: 23px; height: 11px; border: 0; border-radius: 3px; background: #f23c34; font-size: 8px; line-height: 11px; }
.letters { font: bold 16px/40px "Noto Sans", sans-serif; color: #d80d20; }
.desktop { display: flex; align-items: center; gap: 7px; margin-left: auto; white-space: nowrap; }
.desktop svg { width: 10px; height: 10px; margin-bottom: 20px; }
.tray { display: flex; align-items: center; gap: 8px; margin-left: 9px; }
.tray svg { width: 16px; height: 16px; fill: none; stroke: #fff; }
.tray .plain { stroke: none; }
.lang { width: 34px; margin-left: 12px; line-height: 40px; }
.clock { display: flex; flex-direction: column; align-items: center; justify-content: center; width: 57px; font-size: 11px; line-height: 18px; }
.notify { position: relative; display: flex; align-items: center; width: 53px; padding-left: 16px; border-right: 1px solid #6e7789; margin-right: 4px; }
.notify svg { width: 16px; height: 16px; }
.notify .badge { left: 23px; }
```
